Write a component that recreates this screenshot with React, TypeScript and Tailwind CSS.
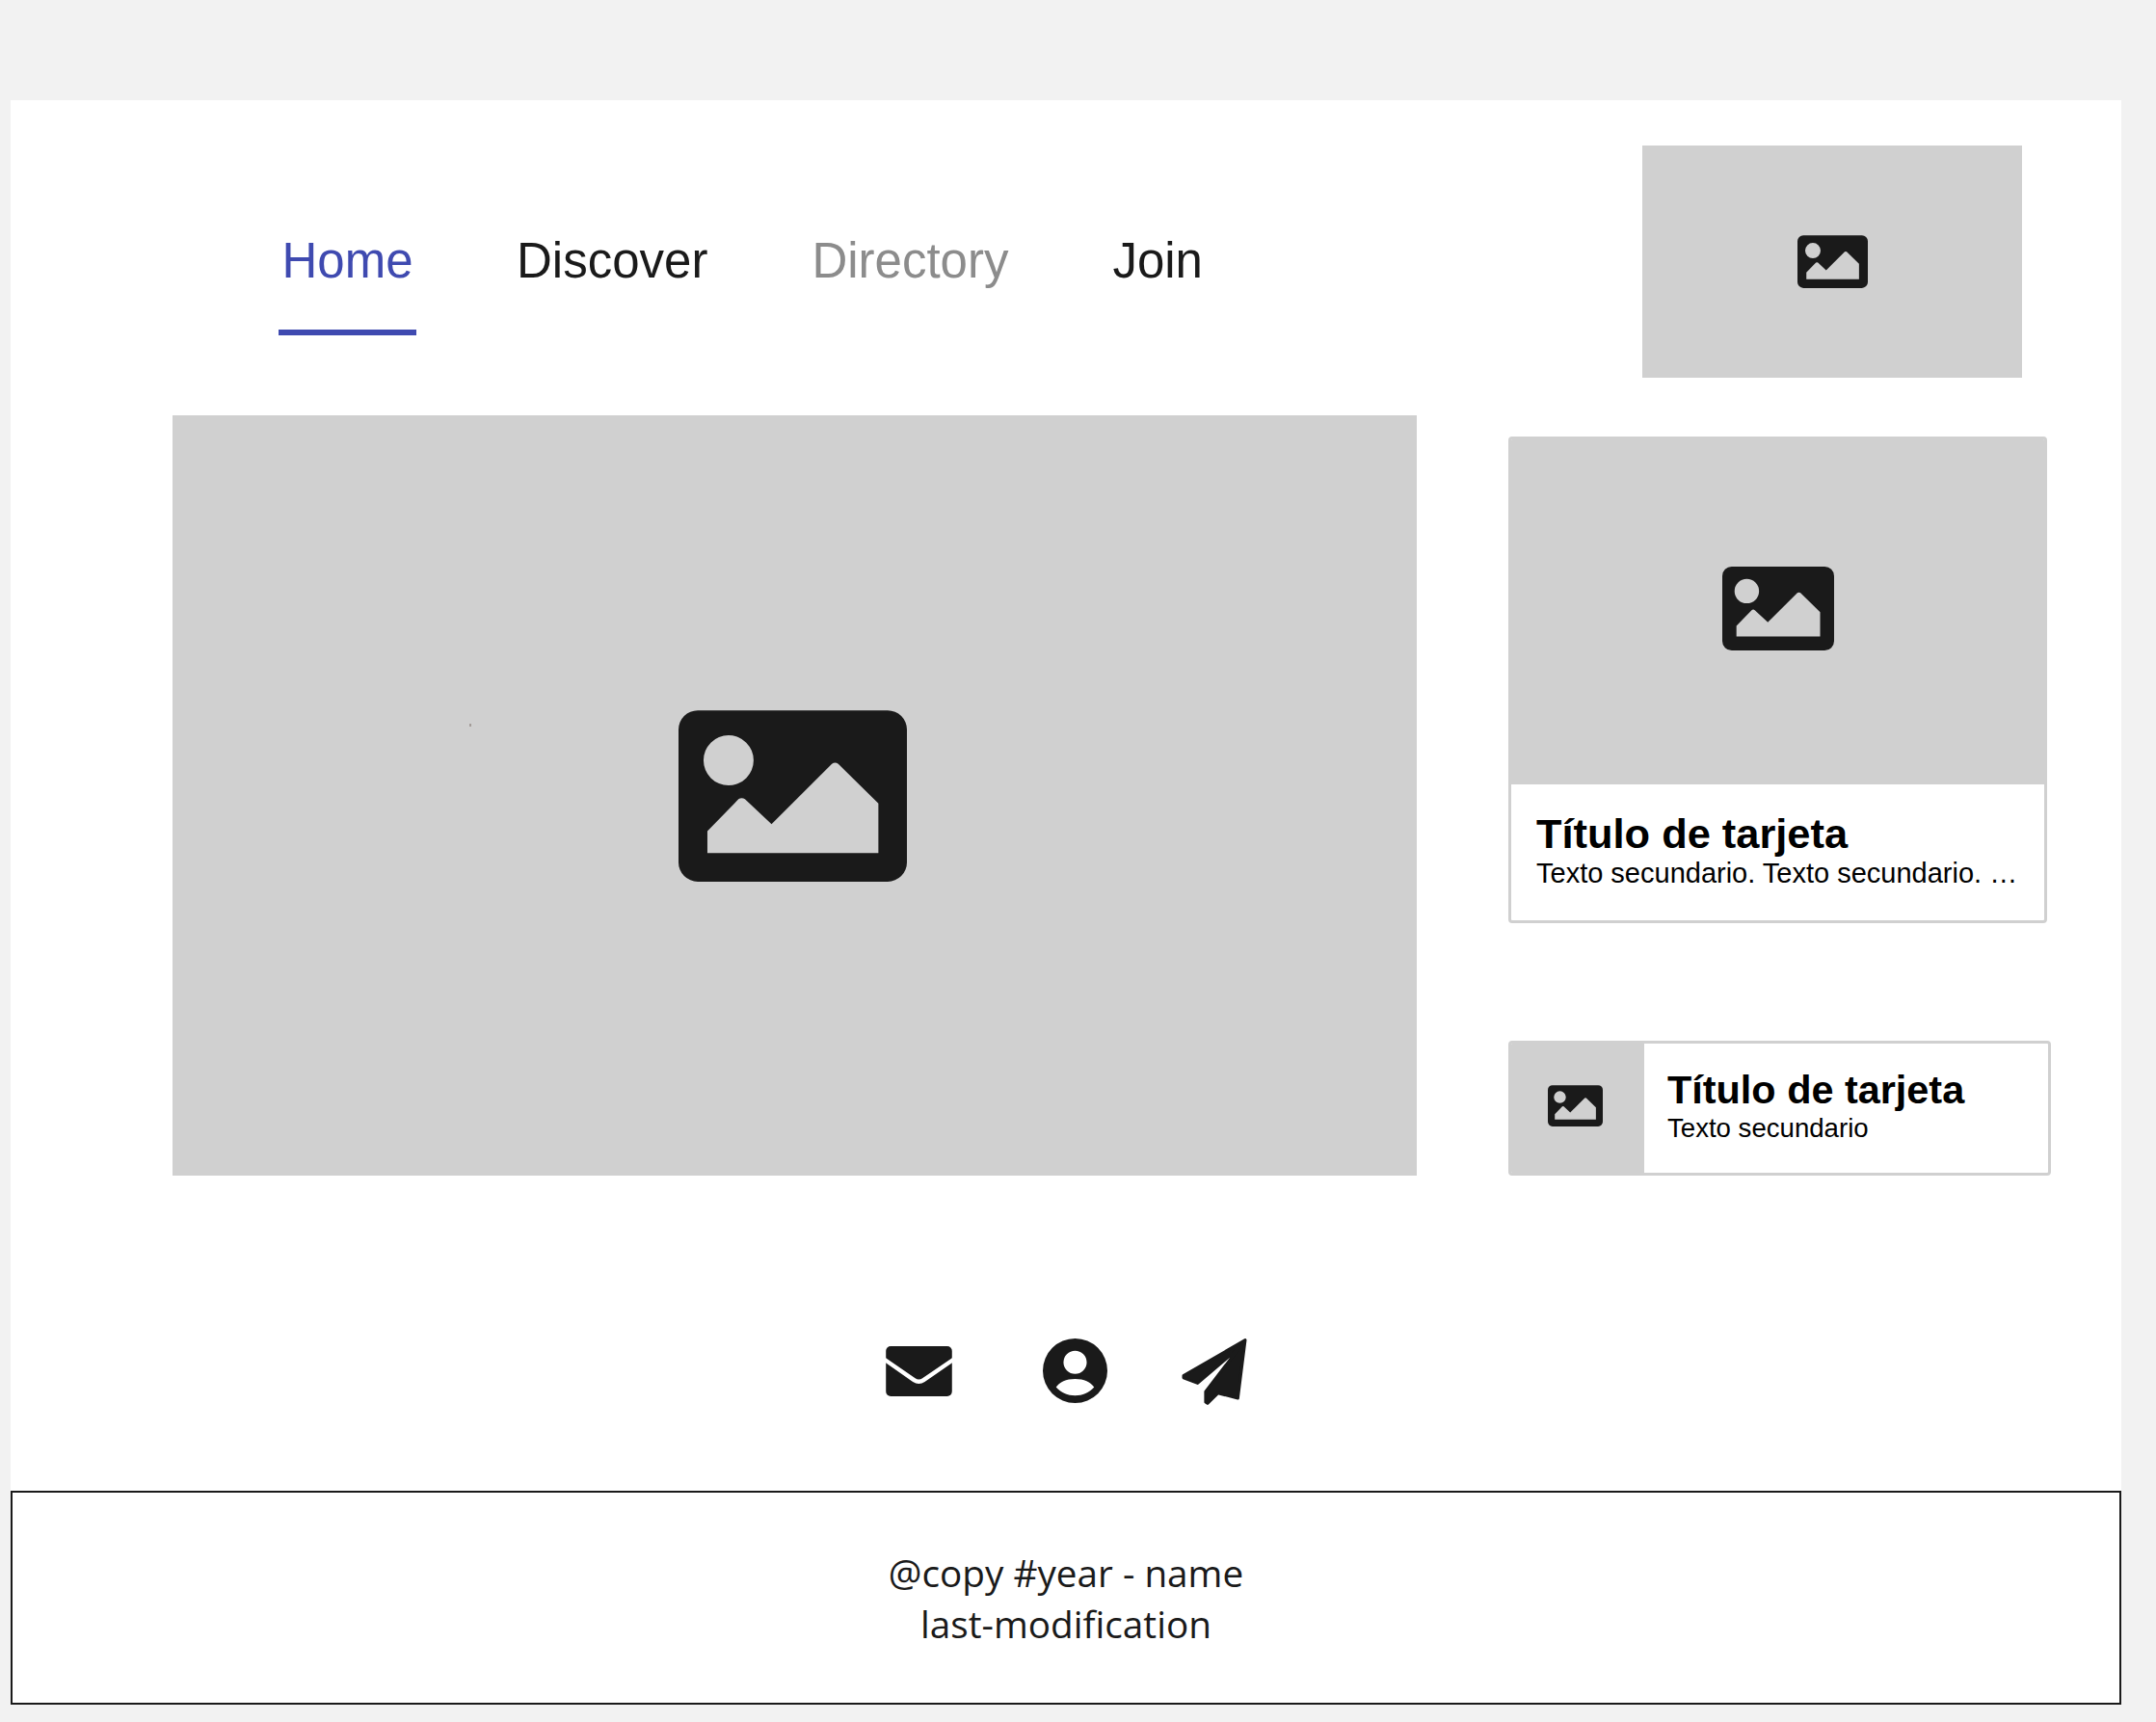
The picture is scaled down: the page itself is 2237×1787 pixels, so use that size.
import React from "react";

const ImageIcon = ({ className }: { className: string }) => (
  <svg viewBox="0 0 712 534" className={className} fill="#1a1a1a">
    <path
      fillRule="evenodd"
      d="M60 0H652A60 60 0 0 1 712 60V474A60 60 0 0 1 652 534H60A60 60 0 0 1 0 474V60A60 60 0 0 1 60 0ZM156 78A78 78 0 1 0 156 234A78 78 0 1 0 156 78ZM90 377V445H623V290L498 167Q488 160 478 167L290 355L207 277Q197 270 187 277Z"
    />
  </svg>
);

const MailIcon = () => (
  <svg viewBox="0 0 207 157" className="ml-px w-[69px] h-[52px]">
    <rect width="207" height="157" rx="15" fill="#1a1a1a" />
    <path d="M-4 42L88 106Q103 116 118 106L211 42" fill="none" stroke="#fff" strokeWidth="13" />
  </svg>
);

const UserIcon = () => (
  <svg viewBox="0 0 200 200" className="w-[67px] h-[67px] ml-[94px]" fill="#1a1a1a">
    <path
      fillRule="evenodd"
      d="M100 0A100 100 0 1 1 100 200A100 100 0 1 1 100 0ZM100 38A36 36 0 1 0 100 110A36 36 0 1 0 100 38ZM100 125C72 125 52 135 41 151C56 168 77 177 100 177C123 177 144 168 159 151C148 135 128 125 100 125Z"
    />
  </svg>
);

const PlaneIcon = () => (
  <svg viewBox="0 0 206 208" className="w-[69px] h-[69px] ml-[77px]" fill="#1a1a1a">
    <path
      d="M198 5L175 187L113 171L80 203L74 199V166L180 28L49 140L5 123L5 116Z"
      stroke="#1a1a1a"
      strokeWidth="9"
      strokeLinejoin="round"
    />
  </svg>
);

const NavLink = ({ label, color, gap }: { label: string; color: string; gap: string }) => (
  <a href="#" className={`${color} ${gap}`}>
    {label}
  </a>
);

export default function App() {
  return (
    <div className="min-h-[1787px] bg-[#f2f2f2] pt-[104px] pb-[19px] pl-[11px] [font-family:'Liberation_Sans',Arial,sans-serif]">
      <div className="w-[2190px] bg-white">
        <header className="flex h-[289px] items-start pt-[47px]">
          <nav className="ml-[278px] flex w-[1415px] text-[51px] leading-[58px] pt-[91px]">
            <div className="flex flex-col items-center">
              <a href="#" className="text-[#3f4ab0]">
                Home
              </a>
              <span className="mt-[42px] h-[6px] w-[143px] bg-[#3f4ab0]" />
            </div>
            <NavLink label="Discover" color="text-[#1a1a1a]" gap="ml-[104px]" />
            <NavLink label="Directory" color="text-[#8c8c8c]" gap="ml-[108px]" />
            <NavLink label="Join" color="text-[#1a1a1a]" gap="ml-[108px]" />
          </nav>
          <div className="flex h-[241px] w-[394px] items-center justify-center bg-[#d0d0d0]">
            <ImageIcon className="w-[73px] h-[55px]" />
          </div>
        </header>

        <main className="flex items-start pl-[168px]">
          <div className="relative mt-[38px] flex h-[789px] w-[1291px] items-center justify-center bg-[#d0d0d0] pr-[5px]">
            <span className="absolute left-[308px] top-[320px] h-[3px] w-[2px] bg-[#a39c98]" />
            <ImageIcon className="w-[237px] h-[178px]" />
          </div>

          <div className="ml-[95px] mt-[60px] flex flex-col">
            <article className="h-[505px] w-[559px] overflow-hidden rounded-[4px] border-[3px] border-[#d0d0d0]">
              <div className="flex h-[358px] items-center justify-center bg-[#d0d0d0] pb-[7px]">
                <ImageIcon className="w-[116px] h-[87px]" />
              </div>
              <div className="pl-[26px] pt-[28px] text-black">
                <h2 className="text-[43.4px] leading-[46px] font-bold">Título de tarjeta</h2>
                <p className="whitespace-nowrap text-[29px] leading-[36px]">
                  Texto secundario. Texto secundario. …
                </p>
              </div>
            </article>

            <article className="mt-[122px] flex h-[140px] w-[563px] overflow-hidden rounded-[4px] border-[3px] border-[#d0d0d0]">
              <div className="flex w-[138px] items-center justify-center bg-[#d0d0d0] pr-[6px] pb-[5px]">
                <ImageIcon className="w-[57px] h-[43px]" />
              </div>
              <div className="pl-[24px] pt-[25px] text-black">
                <h2 className="text-[41.4px] leading-[46px] font-bold">Título de tarjeta</h2>
                <p className="text-[27.6px] leading-[33px]">Texto secundario</p>
              </div>
            </article>
          </div>
        </main>

        <div className="flex h-[327px] items-start pl-[907px] pt-[169px]">
          <div className="mt-[8px]">
            <MailIcon />
          </div>
          <UserIcon />
          <PlaneIcon />
        </div>

        <footer className="flex h-[222px] flex-col items-center justify-center border-2 border-[#1a1a1a] pt-[1px] text-center text-[38.7px] leading-[53px] text-[#1a1a1a] [font-family:'Open_Sans',sans-serif]">
          <p>@copy #year - name</p>
          <p>last-modification</p>
        </footer>
      </div>
    </div>
  );
}
